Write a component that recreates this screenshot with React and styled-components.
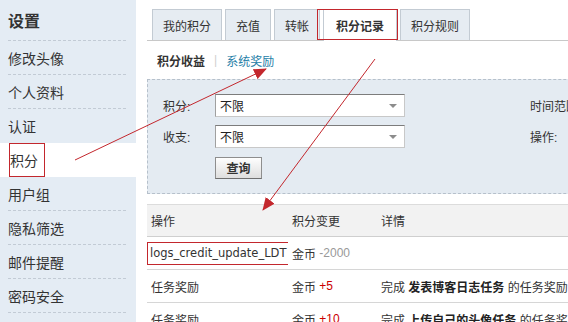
import styled, { createGlobalStyle } from 'styled-components';

const RED = '#c3272d';

const GlobalStyle = createGlobalStyle`
  html, body {
    margin: 0;
    padding: 0;
    background: #fff;
    overflow: hidden;
  }
  body {
    font: 12px "Liberation Sans", "Noto Sans CJK SC", sans-serif;
    color: #333;
  }
`;

const menu = ['修改头像', '个人资料', '认证', '积分', '用户组', '隐私筛选', '邮件提醒', '密码安全', '站点排名'];
const tabs = ['我的积分', '充值', '转帐', '积分记录', '积分规则'];
const ACTIVE_MENU = 3;
const ACTIVE_TAB = 3;

const rows = [
  { op: 'logs_credit_update_LDT', mark: true, amount: '-2000', tone: 'minus', task: null },
  { op: '任务奖励', amount: '+5', tone: 'plus', task: '发表博客日志任务' },
  { op: '任务奖励', amount: '+10', tone: 'plus', task: '上传自己的头像任务' },
];

function App() {
  return (
    <>
      <GlobalStyle />
      <Page>
        <Sidebar>
          <SideTitle>设置</SideTitle>
          {menu.map((item, i) => (
            <SideItem key={item} $active={i === ACTIVE_MENU}>
              <SideLabel $line={i !== ACTIVE_MENU && i !== ACTIVE_MENU - 1}>
                {i === ACTIVE_MENU ? <MenuMark>{item}</MenuMark> : item}
              </SideLabel>
            </SideItem>
          ))}
        </Sidebar>

        <Main>
          <Tabs>
            {tabs.map((t, i) => (
              <Tab key={t} $active={i === ACTIVE_TAB}>
                {t}
              </Tab>
            ))}
          </Tabs>

          <SubNav>
            <b>积分收益</b>
            <Sep>|</Sep>
            <SubLink>系统奖励</SubLink>
          </SubNav>

          <Filter>
            <Label>积分:</Label>
            <Select>
              不限
              <Caret />
            </Select>
            <span />
            <Label>时间范围</Label>

            <Label>收支:</Label>
            <Select>
              不限
              <Caret />
            </Select>
            <span />
            <Label>操作:</Label>

            <span />
            <div>
              <Btn>查询</Btn>
            </div>
          </Filter>

          <div>
            <HeadRow>
              <Cell>操作</Cell>
              <Cell>积分变更</Cell>
              <Cell>详情</Cell>
            </HeadRow>
            {rows.map((r, i) => (
              <Row key={i}>
                <Cell>{r.mark ? <LogMark>{r.op}</LogMark> : r.op}</Cell>
                <Cell>
                  金币&nbsp;<Amount $tone={r.tone}>{r.amount}</Amount>
                </Cell>
                <Cell>
                  {r.task && (
                    <>
                      完成&nbsp;<b>{r.task}</b>&nbsp;的任务奖励
                    </>
                  )}
                </Cell>
              </Row>
            ))}
          </div>
        </Main>

        <Notes viewBox="0 0 568 322" width="568" height="322">
          <defs>
            <marker id="head" markerWidth="13" markerHeight="11" refX="12" refY="5.5" orient="auto" markerUnits="userSpaceOnUse">
              <path d="M0,0 L13,5.5 L0,11 z" fill={RED} />
            </marker>
          </defs>
          <line x1="75" y1="160" x2="266" y2="69" stroke={RED} strokeWidth="1" markerEnd="url(#head)" />
          <line x1="375" y1="59" x2="263" y2="210" stroke={RED} strokeWidth="1" markerEnd="url(#head)" />
        </Notes>
      </Page>
    </>
  );
}

// ---------------------------------- styling ----------------------------------

const Page = styled.div`
  position: relative;
  display: flex;
  width: max-content;
  min-height: 322px;
`;

const Sidebar = styled.aside`
  flex: none;
  width: 136px;
  background: #e4ecf4;
`;

const SideTitle = styled.div`
  box-sizing: border-box;
  height: 41px;
  margin: 0 10px 0 8px;
  display: flex;
  align-items: center;
  border-bottom: 1px dashed #c2cbd5;
  font-size: 16px;
  font-weight: bold;
  color: #333;
`;

const SideItem = styled.div`
  height: 34px;
  padding: 0 10px 0 8px;
  background: ${({ $active }) => ($active ? '#fff' : 'transparent')};
  font-size: 14px;
  color: #333;
`;

const SideLabel = styled.div`
  box-sizing: border-box;
  height: 100%;
  display: flex;
  align-items: center;
  border-bottom: ${({ $line }) => ($line ? '1px dashed #c2cbd5' : '0')};
`;

const MenuMark = styled.span`
  box-sizing: border-box;
  height: 34px;
  display: inline-flex;
  align-items: center;
  margin-left: 1px;
  padding-right: 6px;
  border: 1px solid ${RED};
`;

const Main = styled.main`
  flex: none;
  width: 640px;
  padding: 9px 0 0 11px;
`;

const Tabs = styled.div`
  display: flex;
  align-items: flex-end;
  gap: 3px;
  height: 31px;
  padding-left: 5px;
  border-bottom: 1px solid #c8c8c8;
`;

const Tab = styled.div`
  position: relative;
  box-sizing: border-box;
  height: ${({ $active }) => ($active ? '32px' : '31px')};
  margin-bottom: ${({ $active }) => ($active ? '-1px' : '0')};
  padding: 0 ${({ $active }) => ($active ? '12px' : '10px')};
  display: flex;
  align-items: center;
  border: 1px solid #c3cbd3;
  border-bottom: 0;
  background: ${({ $active }) => ($active ? '#fff' : '#e6ecf2')};
  font-weight: ${({ $active }) => ($active ? 'bold' : 'normal')};
  color: #333;

  &::after {
    content: '';
    display: ${({ $active }) => ($active ? 'block' : 'none')};
    position: absolute;
    left: -7px;
    right: -2px;
    top: -1px;
    bottom: 1px;
    border: 1px solid ${RED};
  }
`;

const SubNav = styled.div`
  height: 38px;
  padding-left: 10px;
  display: flex;
  align-items: center;
  color: #333;
`;

const Sep = styled.span`
  margin: 0 9px;
  color: #d0d0d0;
`;

const SubLink = styled.a`
  color: #2680a7;
`;

const Filter = styled.div`
  display: grid;
  grid-template-columns: 52px 190px 125px auto;
  grid-auto-rows: 23px;
  row-gap: 8px;
  align-items: center;
  margin-bottom: 10px;
  padding: 14px 0 14px 15px;
  border: 1px dashed #b6c0cb;
  border-right: 0;
  background: #e4ebf2;
  color: #333;
`;

const Label = styled.span`
  white-space: nowrap;
`;

const Select = styled.div`
  box-sizing: border-box;
  height: 23px;
  padding: 0 7px 0 4px;
  display: flex;
  align-items: center;
  justify-content: space-between;
  background: #fff;
  border: 1px solid #c8c8c8;
  border-top-color: #7c7c7c;
  border-left-color: #a0a0a0;
  color: #222;
`;

const Caret = styled.i`
  width: 0;
  height: 0;
  border-left: 4px solid transparent;
  border-right: 4px solid transparent;
  border-top: 4px solid #8c8c8c;
`;

const Btn = styled.button`
  width: 47px;
  height: 22px;
  padding: 0;
  border: 1px solid #8e8e8e;
  border-bottom-color: #6f6f6f;
  background: linear-gradient(#fefefe, #dedede);
  font: bold 12px "Liberation Sans", "Noto Sans CJK SC", sans-serif;
  color: #333;
`;

const HeadRow = styled.div`
  box-sizing: border-box;
  height: 33px;
  display: grid;
  grid-template-columns: 141px 89px 1fr;
  border-top: 1px solid #dcdcdc;
  border-bottom: 1px solid #cfcfcf;
  background: #f2f2f2;
`;

const Row = styled.div`
  box-sizing: border-box;
  height: 33px;
  display: grid;
  grid-template-columns: 141px 89px 1fr;
  border-bottom: 1px solid #d6d6d6;
`;

const Cell = styled.div`
  padding-left: 4px;
  display: flex;
  align-items: center;
  white-space: nowrap;
  overflow: hidden;
  color: #333;

  b {
    color: #222;
  }
`;

const LogMark = styled.span`
  box-sizing: border-box;
  height: 23px;
  margin-left: -4px;
  padding: 0 2px;
  display: inline-flex;
  align-items: center;
  border: 1px solid ${RED};
  font-family: "DejaVu Sans", sans-serif;
  font-size: 11.5px;
`;

const Amount = styled.span`
  color: ${({ $tone }) => ($tone === 'plus' ? '#c00' : '#999')};
`;

const Notes = styled.svg`
  position: absolute;
  left: 0;
  top: 0;
  pointer-events: none;
`;

export default App;
